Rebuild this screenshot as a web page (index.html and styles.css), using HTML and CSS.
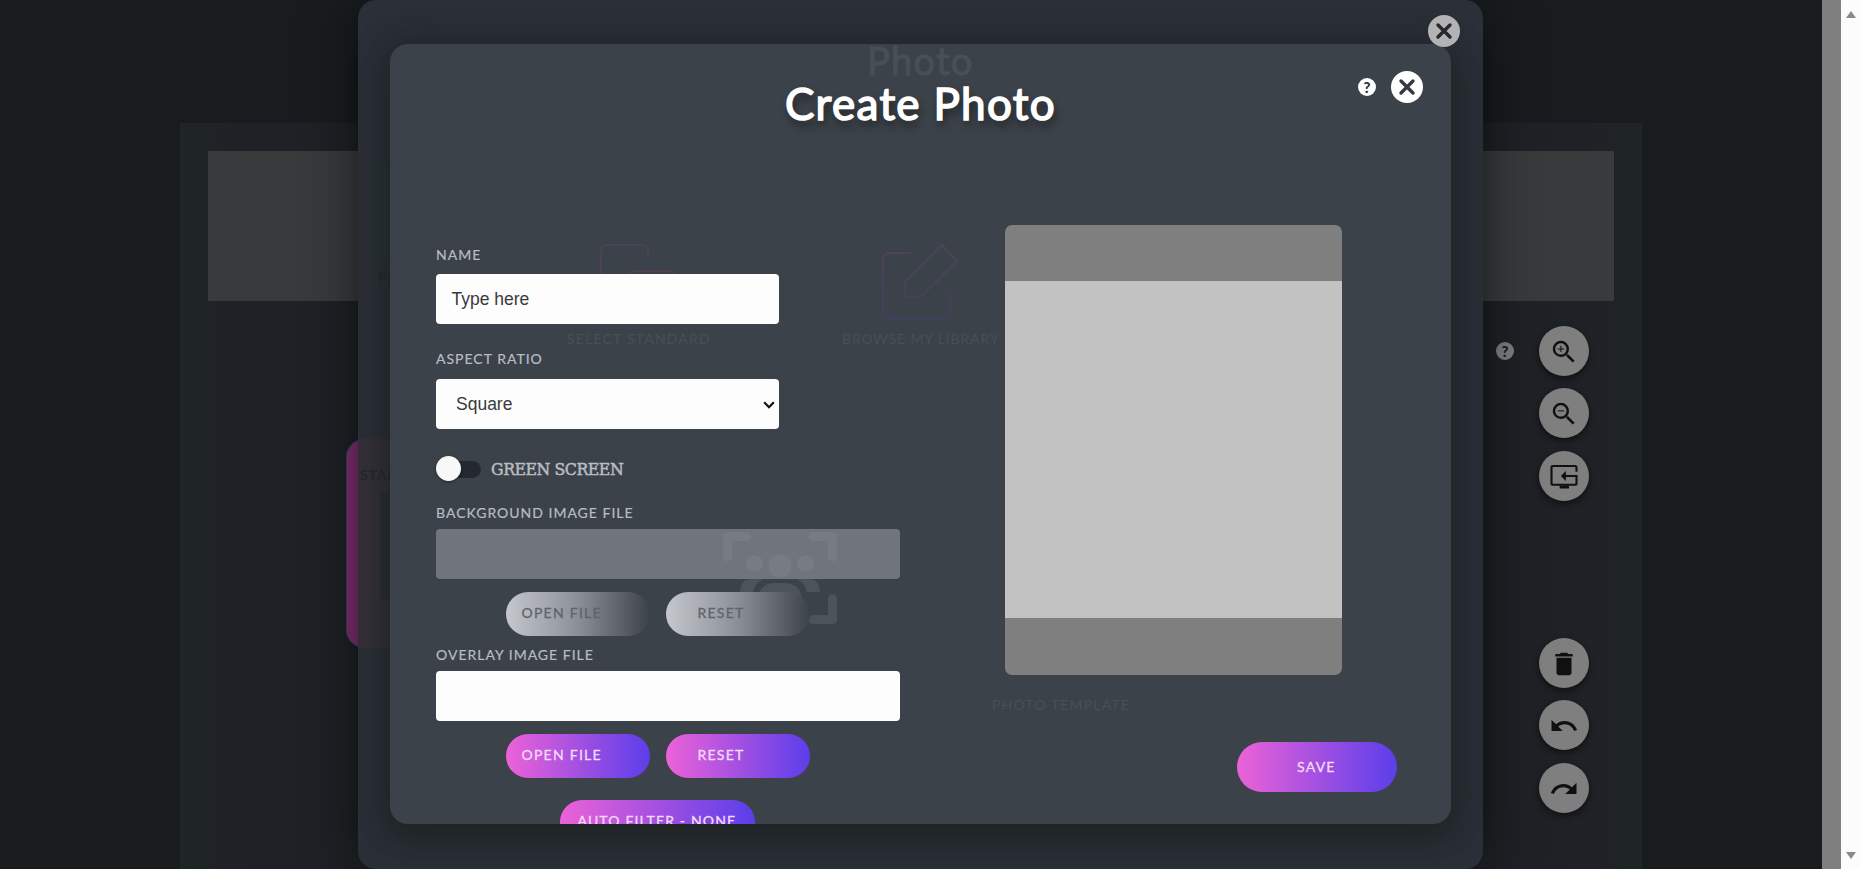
FILE: index.html
```html
<!DOCTYPE html>
<html lang="en">
<head>
<meta charset="utf-8">
<title>Create Photo</title>
<link rel="stylesheet" href="styles.css">
</head>
<body>
<div class="app">
  <main class="stage">
    <section class="board">
      <div class="banner"></div>
      <div class="start-card"></div>
      <aside class="tools">
        <div class="tool-group">
          <button class="tool"><svg viewBox="0 0 24 24"><path d="M15.5 14h-.79l-.28-.27A6.47 6.47 0 0 0 16 9.5 6.5 6.5 0 1 0 9.5 16c1.61 0 3.09-.59 4.23-1.57l.27.28v.79l5 4.99L20.490 19l-4.990-5zm-6 0C7.010 14 5 11.990 5 9.500S7.010 5 9.500 5 14 7.010 14 9.500 11.990 14 9.500 14z"/><path d="M12 9.100H9.900V7h-.8v2.100H7v.8h2.100V12h.8V9.900H12z"/></svg><span class="help tool-help">?</span></button>
          <button class="tool"><svg viewBox="0 0 24 24"><path d="M15.500 14h-.79l-.28-.27A6.470 6.470 0 0 0 16 9.500 6.500 6.500 0 1 0 9.500 16c1.610 0 3.090-.59 4.230-1.570l.27.28v.79l5 4.990L20.490 19l-4.990-5zm-6 0C7.010 14 5 11.990 5 9.500S7.010 5 9.500 5 14 7.010 14 9.500 11.990 14 9.500 14z"/><path d="M7 9.100h5v.8H7z"/></svg></button>
          <button class="tool"><svg viewBox="0 0 24 24" class="wide"><path d="M22 8.500V5.200Q22 4 20.800 4H3.200Q2 4 2 5.200v12.600Q2 19 3.200 19h17.600q1.200 0 1.200-1.200V12H13" fill="none" stroke="currentColor" stroke-width="1.700"/><path d="M9.500 12l4-4v8zM8.500 19.500h7.500V22H8.500z"/></svg></button>
        </div>
        <div class="tool-group">
          <button class="tool"><svg viewBox="0 0 24 24"><path d="M6 19c0 1.100.9 2 2 2h8c1.100 0 2-.9 2-2V7H6v12zM19 4h-3.500l-1-1h-5l-1 1H5v2h14V4z"/></svg></button>
          <button class="tool"><svg viewBox="0 0 24 24"><path d="M12.500 8c-2.650 0-5.050.99-6.900 2.600L2 7v9h9l-3.620-3.620c1.390-1.160 3.160-1.880 5.120-1.880 3.540 0 6.550 2.310 7.600 5.500l2.370-.78C21.080 11.030 17.150 8 12.500 8z"/></svg></button>
          <button class="tool"><svg viewBox="0 0 24 24"><path d="M18.400 10.600C16.550 8.990 14.150 8 11.500 8c-4.650 0-8.580 3.030-9.960 7.220L3.900 16c1.050-3.190 4.050-5.500 7.600-5.500 1.950 0 3.730.72 5.120 1.880L13 16h9V7l-3.600 3.600z"/></svg></button>
        </div>
      </aside>
    </section>

    <section class="modal outer">
      <span class="teal-tile"></span>
      <span class="card-tint"></span>
      <span class="ghost dark g-photo-tag">PHOTO</span>
      <span class="ghost dark g-start">START</span>
      <span class="dark-tile"></span>
    </section>

    <section class="modal inner">
      <div class="ghost-title">Photo</div>
      <span class="ghost g-select">SELECT STANDARD</span>
      <span class="ghost g-browse">BROWSE MY LIBRARY</span>
      <span class="ghost g-template">PHOTO TEMPLATE</span>
      <svg class="g-copy" viewBox="0 0 80 80"><path d="M2 60V9q0-7 7-7h34q6 0 6 6v6M28 60V36q0-8 8-8h32q8 0 8 8v24" fill="none" stroke="#4b4354" stroke-width="2"/></svg>
      <svg class="g-edit" viewBox="0 0 78 80">
        <defs><linearGradient id="fade" x1="0" y1="0" x2="0" y2="80" gradientUnits="userSpaceOnUse"><stop offset="0" stop-color="#504355"/><stop offset="1" stop-color="#3e3f5f"/></linearGradient></defs>
        <path d="M30 10H9q-7 0-7 7v52q0 7 7 7h53q7 0 7-7V49M24 54V39L61 2l15 16-36 36z" fill="none" stroke="url(#fade)" stroke-width="2"/></svg>
      <header class="head">
        <h1>Create Photo</h1>
        <div class="head-actions">
          <span class="help">?</span>
          <button class="close"><svg viewBox="0 0 32 32"><path d="M10 10l12 12M22 10l-12 12"/></svg></button>
        </div>
      </header>
      <div class="content">
        <form class="form">
          <label class="label l-name">NAME</label>
          <div class="field f-name">Type here</div>
          <label class="label l-ratio">ASPECT RATIO</label>
          <div class="field f-select">Square<svg viewBox="0 0 12 8"><path d="M1.200 1.300L6 6.200l4.800-4.900"/></svg></div>
          <div class="switch-row"><span class="switch"></span><span class="switch-label">GREEN SCREEN</span></div>
          <label class="label l-bg">BACKGROUND IMAGE FILE</label>
          <div class="field f-file disabled">
            <svg class="g-people" viewBox="0 0 114 92"><g fill="none" stroke="currentColor" stroke-width="9" stroke-linecap="round" stroke-linejoin="round"><path d="M4.500 25V4.500h19M90 4.500h19.500V25M109.500 67v20.500H90"/></g><g fill="currentColor"><circle cx="31.500" cy="31.500" r="8.500"/><circle cx="57" cy="34" r="11.500"/><circle cx="82.500" cy="31.500" r="8.500"/><path d="M17 60q0-14 14-13h9q-8 4-10 13zM97 60q0-14-14-13h-9q8 4 10 13zM36 62q4-11 15-11h12q11 0 15 11v6H36z"/></g></svg>
          </div>
          <div class="buttons off"><span class="btn"><b class="t-open">OPEN FILE</b></span><span class="btn"><b class="t-reset">RESET</b></span></div>
          <label class="label l-over">OVERLAY IMAGE FILE</label>
          <div class="field f-file"></div>
          <div class="buttons"><span class="btn"><b class="t-open">OPEN FILE</b></span><span class="btn"><b class="t-reset">RESET</b></span></div>
          <span class="btn auto"><b class="t-auto">AUTO FILTER - NONE</b></span>
        </form>
        <div class="side">
          <div class="preview"><div class="frame"></div></div>
          <span class="btn save"><b class="t-save">SAVE</b></span>
        </div>
      </div>
    </section>
    <button class="close close-dim"><svg viewBox="0 0 32 32"><path d="M10 10l12 12M22 10l-12 12"/></svg></button>
  </main>
  <div class="inner-scroll"></div>
  <div class="scrollbar"><i class="up"></i><i class="down"></i></div>
</div>
</body>
</html>
```
FILE: styles.css
```css
* { box-sizing: border-box; }
body { margin: 0; background: #181c1f; font-family: Lato, "Liberation Sans", sans-serif; overflow: hidden; }
button { border: 0; padding: 0; font: inherit; }
.app { display: flex; height: 869px; overflow: hidden; }
.stage { position: relative; flex: 1; overflow: hidden; padding: 123px 180px 0; }
.inner-scroll { width: 19px; background: #7f7f7f; }
.scrollbar { width: 19px; background: #fcfcfc; display: flex; flex-direction: column; justify-content: space-between; align-items: center; padding: 11px 0 10px; }
.scrollbar i { border: 5.5px solid transparent; }
.scrollbar .up { border-bottom: 7px solid #8a8a8a; border-top: 0; }
.scrollbar .down { border-top: 7px solid #8a8a8a; border-bottom: 0; }

.board { position: relative; height: 760px; background: linear-gradient(90deg, #1f2427, #1e2125 80px, #1e2125 1380px, #1f2427); padding: 28px; }
.banner { height: 150px; background: #383a3b; }
.start-card { position: absolute; left: 166px; top: 316px; width: 140px; height: 209px; border-radius: 18px; background: #7d3070; border: 1px solid #3a4068; }
.tools { display: flex; flex-direction: column; align-items: flex-end; gap: 137px; padding: 25px 25px 0 0; }
.tool-group { display: flex; flex-direction: column; gap: 12.400px; }
.tool { position: relative; width: 50px; height: 50px; border-radius: 50%; background: #7f7f7f; color: #101010; display: grid; place-items: center; box-shadow: 0 3px 6px rgba(0,0,0,.5); }
.tool > svg { width: 30px; height: 30px; fill: currentColor; }
.tool > svg:not(.wide) { transform: translateY(1px); }
.help { width: 18px; height: 18px; border-radius: 50%; background: #fff; color: #2d3339; font: 900 15px/18px Lato, sans-serif; text-align: center; }
.tool-help { position: absolute; left: -43px; top: 16px; background: #7f7f7f; color: #1a1d20; }

.modal { position: absolute; border-radius: 18px; }
.outer { left: 358px; top: 0; width: 1125px; height: 869px; background: #2b2f37; box-shadow: 0 5px 55px rgba(0,0,0,.5); }
.inner { left: 390px; top: 44px; width: 1061px; height: 780px; display: flex; flex-direction: column; background: #3c4249; box-shadow: 0 0 30px rgba(30,38,34,.55), 0 12px 35px rgba(24,27,27,.7); }
.close { width: 32px; height: 32px; border-radius: 50%; background: #fff; color: #343a41; }
.close svg { display: block; width: 32px; height: 32px; fill: none; stroke: currentColor; stroke-width: 3.400; stroke-linecap: round; }
.close-dim { position: absolute; left: 1428px; top: 15px; background: #b3b3b3; color: #24292e; }

.ghost { position: absolute; color: #484f56; font-size: 14px; line-height: 20px; white-space: nowrap; }
.ghost-title { position: absolute; left: 477px; top: -9px; font-size: 38px; line-height: 50px; letter-spacing: 1.300px; color: #484f57; -webkit-text-stroke: 1px #484f57; }
.g-select { left: 177px; top: 285px; letter-spacing: 1.200px; }
.g-browse { left: 452px; top: 285px; letter-spacing: .85px; }
.g-template { left: 602px; top: 651px; letter-spacing: 1.150px; }
.g-copy { position: absolute; left: 209px; top: 199px; width: 80px; height: 80px; }
.g-edit { position: absolute; left: 491px; top: 199px; width: 78px; height: 80px; }
.dark { color: #24272d; font-weight: 700; letter-spacing: .8px; }
.g-photo-tag { left: 20px; top: 267px; }
.g-start { left: 2px; top: 465px; }
.teal-tile { position: absolute; left: 12px; top: 163px; width: 40px; height: 94px; background: #263238; }
.card-tint { position: absolute; left: 0; top: 439px; width: 60px; height: 209px; background: #35303a; }
.dark-tile { position: absolute; left: 22px; top: 492px; width: 20px; height: 108px; background: #2a2d33; }

.head { position: relative; height: 181px; flex: none; }
h1 { margin: 0; padding-top: 31px; text-align: center; color: #fff; font-weight: 400; font-size: 44px; line-height: 56px; letter-spacing: 1.300px; -webkit-text-stroke: 1.500px #fff; text-shadow: 2px 6px 8px rgba(0,0,0,.55); }
.head-actions { position: absolute; right: 28px; top: 27px; display: flex; align-items: center; gap: 15px; }

.content { position: relative; flex: 1; display: flex; overflow: hidden; border-radius: 0 0 18px 18px; }
.form { width: 464px; margin-left: 46px; padding-top: 20px; display: flex; flex-direction: column; flex: none; }
.label { color: #b9bcc2; font-size: 14px; line-height: 20px; height: 20px; flex: none; letter-spacing: 1px; -webkit-text-stroke: .2px #b9bcc2; white-space: nowrap; }
.field { flex: none; background: #fdfdfd; border-radius: 4px; height: 50px; width: 343px; font: 17.500px/51px "Liberation Sans", Arial, sans-serif; color: #3a3a3a; padding-left: 15.500px; }
.f-name { margin-top: 9px; }
.l-ratio { margin-top: 25px; }
.f-select { margin-top: 10px; padding: 1px 4px 0 20px; display: flex; justify-content: space-between; align-items: center; }
.f-select svg { width: 12px; height: 8px; fill: none; stroke: #111; stroke-width: 2.200; }
.switch-row { flex: none; margin-top: 27px; height: 26px; display: flex; align-items: center; gap: 10px; }
.switch { position: relative; width: 45px; height: 17px; border-radius: 9px; background: #24292f; }
.switch::before { content: ""; position: absolute; left: 0; top: -4.500px; width: 25px; height: 25px; border-radius: 50%; background: #f8f8f8; box-shadow: 0 1px 3px rgba(0,0,0,.4); }
.switch-label { font: 17.500px/26px "DejaVu Serif Condensed", "DejaVu Serif", serif; font-stretch: condensed; color: #b9bcc2; letter-spacing: -.45px; -webkit-text-stroke: .5px #b9bcc2; }
.l-bg { margin-top: 21px; }
.f-file { position: relative; width: 464px; margin-top: 6px; }
.disabled { background: #70747b; }
.g-people { position: absolute; left: 287px; top: 3px; width: 114px; height: 92px; color: rgba(150,162,165,.18); }
.buttons { position: relative; flex: none; display: flex; gap: 15.500px; margin: 13px 0 0 70px; }
.btn { display: block; width: 144px; height: 44px; border-radius: 23px; background: linear-gradient(90deg, #ec62d8, #5b3eea); color: #f4dcf8; font-size: 14px; line-height: 42px; }
.btn b { display: block; font-weight: 400; letter-spacing: 1.250px; -webkit-text-stroke: .3px currentColor; white-space: nowrap; }
.off .btn { background: linear-gradient(90deg, #c4c8cd, #8b8f97 50%, #3c4249); color: #5f646c; }
.btn .t-open { padding-left: 15.500px; }
.btn .t-reset { padding-left: 32px; }
.l-over { margin-top: 9px; }
.auto { flex: none; width: 195px; margin: 22px 0 0 124px; }
.btn .t-auto { padding-left: 17.500px; letter-spacing: 1.150px; }
.side { width: 392px; margin-left: 105px; display: flex; flex-direction: column; align-items: flex-start; }
.preview { width: 337px; height: 449.500px; border-radius: 7px; background: #7f7f7f; padding: 56px 0 57px; flex: none; }
.frame { height: 100%; background: #c2c2c2; }
.save { width: 160px; height: 50px; border-radius: 25px; margin: 67.500px 0 0 232px; line-height: 49px; }
.btn .t-save { padding-left: 60px; }
```
